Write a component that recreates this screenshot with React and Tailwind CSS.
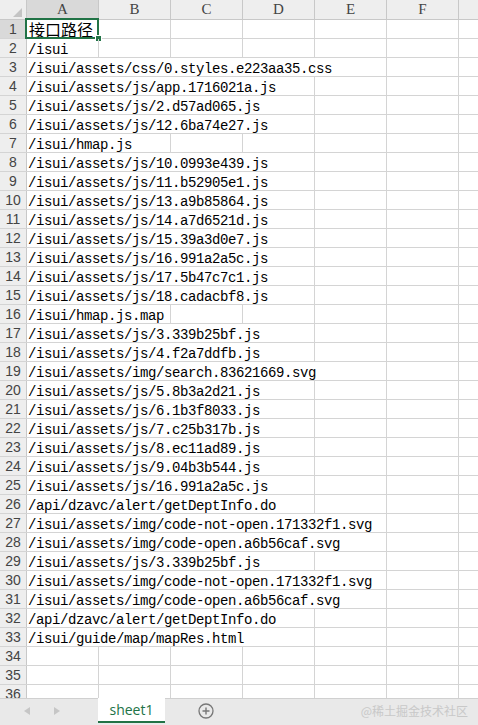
import React from 'react';

const paths = [
  '/isui',
  '/isui/assets/css/0.styles.e223aa35.css',
  '/isui/assets/js/app.1716021a.js',
  '/isui/assets/js/2.d57ad065.js',
  '/isui/assets/js/12.6ba74e27.js',
  '/isui/hmap.js',
  '/isui/assets/js/10.0993e439.js',
  '/isui/assets/js/11.b52905e1.js',
  '/isui/assets/js/13.a9b85864.js',
  '/isui/assets/js/14.a7d6521d.js',
  '/isui/assets/js/15.39a3d0e7.js',
  '/isui/assets/js/16.991a2a5c.js',
  '/isui/assets/js/17.5b47c7c1.js',
  '/isui/assets/js/18.cadacbf8.js',
  '/isui/hmap.js.map',
  '/isui/assets/js/3.339b25bf.js',
  '/isui/assets/js/4.f2a7ddfb.js',
  '/isui/assets/img/search.83621669.svg',
  '/isui/assets/js/5.8b3a2d21.js',
  '/isui/assets/js/6.1b3f8033.js',
  '/isui/assets/js/7.c25b317b.js',
  '/isui/assets/js/8.ec11ad89.js',
  '/isui/assets/js/9.04b3b544.js',
  '/isui/assets/js/16.991a2a5c.js',
  '/api/dzavc/alert/getDeptInfo.do',
  '/isui/assets/img/code-not-open.171332f1.svg',
  '/isui/assets/img/code-open.a6b56caf.svg',
  '/isui/assets/js/3.339b25bf.js',
  '/isui/assets/img/code-not-open.171332f1.svg',
  '/isui/assets/img/code-open.a6b56caf.svg',
  '/api/dzavc/alert/getDeptInfo.do',
  '/isui/guide/map/mapRes.html',
];

const cols = ['A', 'B', 'C', 'D', 'E', 'F'];
const rows = ['接口路径', ...paths];
while (rows.length < 36) rows.push('');

const mono = { fontFamily: '"Liberation Mono", "Noto Sans CJK SC", monospace' };

function Row({ n, text }) {
  // how many columns the text spills over (8px per char)
  const span = text ? Math.min(6, Math.max(1, Math.ceil((text.length * 8 + 4) / 72))) : 1;
  const selected = n === 1;
  return (
    <div className="flex h-[19px] shrink-0 border-b border-[#d4d4d4]">
      <div
        className={`w-[27px] shrink-0 border-r border-[#c8c8c8] flex items-center justify-center text-[14px] text-[#444] font-['Liberation_Sans',sans-serif] ${
          selected ? 'bg-[#d9d9d9]' : 'bg-[#eeeeee]'
        }`}
      >
        {n}
      </div>
      <div
        className="shrink-0 border-r border-[#d4d4d4] relative"
        style={{ width: span * 72 }}
      >
        {selected ? (
          <>
            <div className="absolute left-[-2px] top-[-2px] w-[74px] h-[21px] border-2 border-[#217346]" />
            <div className="absolute left-[68px] top-[15px] w-[7px] h-[7px] bg-[#217346] border border-white" />
            <span className="block pl-[2px] pt-[1px] text-[16px] leading-[17px] text-black font-['Noto_Sans_CJK_SC',sans-serif]">
              {text}
            </span>
          </>
        ) : (
          <span
            className="block pl-[1px] pt-[4px] text-[14px] leading-[14px] tracking-[-0.4px] text-black whitespace-nowrap"
            style={mono}
          >
            {text}
          </span>
        )}
      </div>
      {Array.from({ length: 6 - span }).map((_, i) => (
        <div key={i} className="w-[72px] shrink-0 border-r border-[#d4d4d4]" />
      ))}
      <div className="flex-1" />
    </div>
  );
}

export default function App() {
  return (
    <div className="w-[478px] h-[725px] bg-white flex flex-col overflow-hidden">
      <div className="h-[698px] overflow-hidden flex flex-col">
        {/* column headers */}
        <div className="flex h-[20px] shrink-0 border-b border-[#c8c8c8] bg-[#eeeeee]">
          <div className="w-[27px] shrink-0 border-r border-[#c8c8c8] relative">
            <svg width="27" height="19" className="absolute left-0 top-0">
              <polygon points="22,8 22,17 13,17" fill="#c4c4c4" />
            </svg>
          </div>
          {cols.map((c) => (
            <div
              key={c}
              className={`w-[72px] shrink-0 border-r border-[#c8c8c8] flex items-center justify-center text-[15px] text-[#444] font-['Liberation_Serif',serif] ${
                c === 'A' ? 'bg-[#d9d9d9]' : ''
              }`}
            >
              {c}
            </div>
          ))}
          <div className="flex-1" />
        </div>
        {rows.map((t, i) => (
          <Row key={i} n={i + 1} text={t} />
        ))}
      </div>

      {/* sheet tab bar */}
      <div className="flex-1 flex items-start bg-[#e9e9e9] border-t border-[#d0d0d0]">
        <div className="w-[98px] h-[24px] flex items-center">
          <svg width="6" height="8" viewBox="0 0 6 8" className="ml-[24px]">
            <polygon points="6,0 6,8 0,4" fill="#c6c6c6" />
          </svg>
          <svg width="6" height="8" viewBox="0 0 6 8" className="ml-[24px]">
            <polygon points="0,0 0,8 6,4" fill="#c6c6c6" />
          </svg>
        </div>
        <div className="w-[67px] h-[25px] -mt-[1px] bg-white border-b-2 border-[#217346] flex items-center justify-center text-[14px] text-[#217346] font-['Open_Sans',sans-serif]">
          sheet1
        </div>
        <div className="ml-[33px] h-[24px] flex items-center">
          <svg width="16" height="16" viewBox="0 0 16 16">
            <circle cx="8" cy="8" r="7" fill="none" stroke="#777" strokeWidth="1.3" />
            <path d="M8 4.5v7M4.5 8h7" stroke="#777" strokeWidth="1.4" />
          </svg>
        </div>
        <div className="ml-auto mr-[10px] mt-[3px] text-[12px] text-[#c8c8c8] font-['Noto_Sans_CJK_SC',sans-serif]">
          @稀土掘金技术社区
        </div>
      </div>
    </div>
  );
}
